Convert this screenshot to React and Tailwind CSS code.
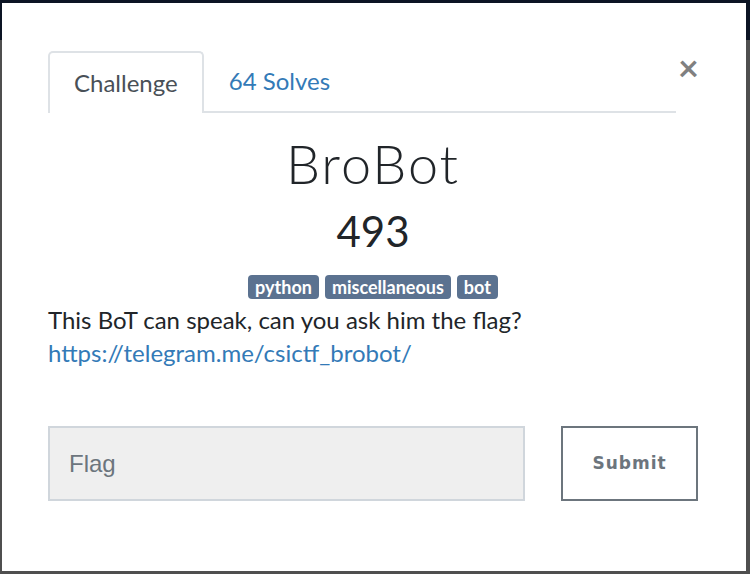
export default function App() {
  const tags = ['python', 'miscellaneous', 'bot'];

  return (
    <div className="h-[574px] w-[750px] overflow-hidden bg-[linear-gradient(to_bottom,#0c1424_40px,#4f4f4f_40px)] pb-[3px] pl-[2px] pr-[4px] pt-[3px] font-['Lato',sans-serif]">
      <div className="flex h-full flex-col bg-white pl-[46px] pr-[48px] pt-[48px]">
        <div className="flex items-start">
          <div className="flex flex-1 border-b-2 border-[#dee2e6]">
            <div className="-mb-[2px] rounded-t-[5px] border-2 border-b-0 border-[#dee2e6] bg-white px-[24px] pb-[12px] pt-[12px] text-[24px] text-[#495057]">
              Challenge
            </div>
            <div className="px-[25px] pt-[12px] text-[24px] text-[#337ab7]">64 Solves</div>
          </div>
          <div className="-mt-[2px] ml-[2px] w-[20px] text-center text-[36px] font-bold leading-none text-[#808080]">×</div>
        </div>

        <h2 className="mt-[24px] text-center text-[54px] font-light leading-none tracking-[2px] text-[#212529]">BroBot</h2>
        <h3 className="mt-[19px] text-center text-[42px] leading-none text-[#212529]">493</h3>

        <div className="mt-[23px] flex justify-center gap-[6px]">
          {tags.map((t) => (
            <span key={t} className="rounded-[4px] bg-[#5b7290] px-[7px] py-[2px] text-[18px] font-bold leading-[20px] text-white">
              {t}
            </span>
          ))}
        </div>

        <p className="mt-[4px] text-[24px] leading-[33px] text-[#212529]">
          This BoT can speak, can you ask him the flag?
          <br />
          <a className="text-[#337ab7]">https://telegram.me/csictf_brobot/</a>
        </p>

        <div className="mt-[57px] flex items-center">
          <div className="flex h-[75px] w-[477px] items-center border-2 border-[#d0d6dc] bg-[#efefef] px-[19px] font-['Liberation_Sans',sans-serif] text-[24px] text-[#6c757d]">
            Flag
          </div>
          <button className="ml-auto h-[75px] w-[137px] border-2 border-[#6c757d] bg-white font-['DejaVu_Sans',sans-serif] text-[17px] font-bold tracking-[1px] text-[#6c757d]">
            Submit
          </button>
        </div>
      </div>
    </div>
  );
}
